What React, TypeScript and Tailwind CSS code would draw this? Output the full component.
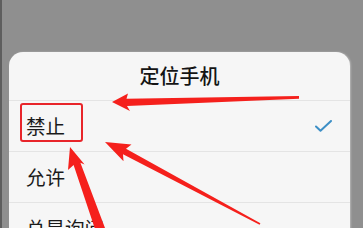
import React from 'react';

const options = [
  { label: '禁止', checked: true },
  { label: '允许', checked: false },
  { label: '总是询问', checked: false },
];

const Arrows: React.FC = () => (
  <svg
    className="pointer-events-none absolute inset-0"
    width={363}
    height={228}
    viewBox="0 0 363 228"
  >
    {/* arrow to the selected row */}
    <polygon
      points="110,102 126,93.5 124.5,98.8 297,96 297,98.8 125,106 128,111"
      fill="#f5201c"
    />
    {/* arrow from bottom right */}
    <polygon
      points="103,142 129.5,144.5 124,148.8 258.4,223.3 257.6,224.7 121,154.2 121.5,161.2"
      fill="#f5201c"
    />
    {/* arrow from bottom */}
    <polygon
      points="68,147 82.6,164.4 78.4,162.8 105.8,235.4 96.2,238.6 71.6,165 66,170"
      fill="#f5201c"
    />
  </svg>
);

const App: React.FC = () => {
  return (
    <div className="relative h-[228px] w-[363px] overflow-hidden border-l-2 border-[#5e5e5e] bg-[#8f8f8f] pt-[52px] font-['Noto_Sans_CJK_SC','Noto_Sans',sans-serif]">
      <div className="ml-[7px] w-[341px] rounded-t-[14px] bg-[#f6f6f6] shadow-[1px_0_2px_rgba(255,255,255,0.35)]">
        <div className="flex h-[48px] items-center justify-center text-[20px] font-medium text-[#141414]">
          定位手机
        </div>
        {options.map((opt) => (
          <div
            key={opt.label}
            className="flex h-[51px] items-center justify-between border-t border-[#e4e4e4] pl-[17px] pr-[18px] text-[19.5px] text-[#1a1a1a]"
          >
            <span>{opt.label}</span>
            {opt.checked && (
              <svg width={17} height={12} viewBox="0 0 17 12" fill="none">
                <path
                  d="M1 6.5 L5.5 10.8 L16 1"
                  stroke="#3d8fc6"
                  strokeWidth={2}
                  strokeLinecap="round"
                  strokeLinejoin="round"
                />
              </svg>
            )}
          </div>
        ))}
      </div>
      {/* red highlight around 禁止 */}
      <div className="absolute left-[18px] top-[103px] h-[39px] w-[63px] rounded-[3px] border-[2.5px] border-[#e8252a]" />
      <Arrows />
    </div>
  );
};

export default App;
